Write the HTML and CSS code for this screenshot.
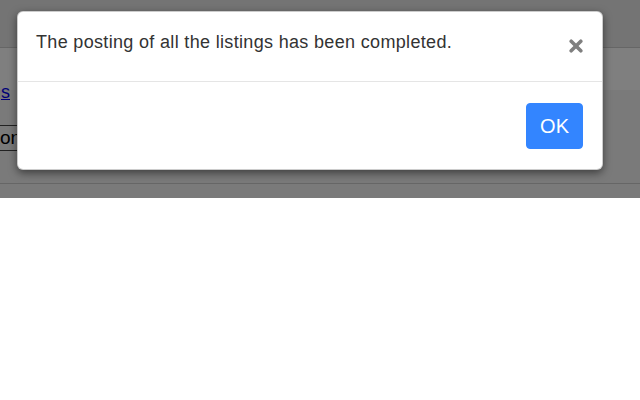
FILE: index.html
```html
<!DOCTYPE html>
<html lang="en">
<head>
<meta charset="utf-8">
<title>Postings</title>
<link rel="stylesheet" href="styles.css">
</head>
<body>
<div class="page">
  <header class="topbar"></header>
  <div class="main">
    <div class="band">
      <a class="link" href="#">s</a>
    </div>
    <div class="action-row"><span class="action">on</span></div>
  </div>
  <div class="backdrop"></div>
  <div class="modal" role="dialog">
    <div class="modal-header">
      <p class="modal-title">The posting of all the listings has been completed.</p>
      <button class="close" aria-label="Close">
        <svg width="14" height="14" viewBox="0 0 14 14"><path d="M2.2 2.2 L11.8 11.8 M11.8 2.2 L2.2 11.8" stroke="#7f7f7f" stroke-width="3.6" stroke-linecap="round" fill="none"/></svg>
      </button>
    </div>
    <div class="modal-footer">
      <button class="btn-ok">OK</button>
    </div>
  </div>
</div>
</body>
</html>
```
FILE: styles.css
```css
html, body {
  margin: 0;
  padding: 0;
  background: #ffffff;
  font-family: "Liberation Sans", Arial, sans-serif;
}
.page {
  position: relative;
  height: 198px;
  overflow: hidden;
  background: #f4f4f4;
}
.topbar {
  height: 47px;
  background: #e8e8e8;
  border-bottom: 1px solid #cccccc;
}
.main {
  height: 135px;
  border-bottom: 1px solid #cccccc;
}
.band {
  height: 42px;
  box-sizing: border-box;
  padding: 34px 0 0 1px;
  background: #ffffff;
}
.link {
  display: inline-block;
  color: #0000ee;
  font-size: 18px;
  line-height: 20px;
  text-decoration: underline;
}
.action-row {
  display: flex;
  margin-top: 35px;
}
.action {
  font-size: 19px;
  line-height: 24px;
  padding-right: 20px;
  color: #000;
  border-top: 1px solid #444;
  border-bottom: 1px solid #444;
  white-space: nowrap;
}
.backdrop {
  position: absolute;
  inset: 0;
  background: rgba(0, 0, 0, 0.5);
}
.modal {
  position: absolute;
  top: 11px;
  left: 17px;
  width: 586px;
  box-sizing: border-box;
  background: #ffffff;
  border: 1px solid rgba(0, 0, 0, 0.2);
  border-radius: 6px;
  box-shadow: 0 3px 9px rgba(0, 0, 0, 0.5);
}
.modal-header {
  display: flex;
  justify-content: space-between;
  align-items: flex-start;
  padding: 17px 19px 26px 18px;
  border-bottom: 1px solid #e5e5e5;
}
.modal-title {
  margin: 0;
  font-size: 18px;
  letter-spacing: 0.33px;
  line-height: 26px;
  color: #333333;
}
.close {
  border: 0;
  background: none;
  padding: 0;
  margin-top: 10px;
  width: 14px;
  height: 14px;
  display: flex;
}
.modal-footer {
  display: flex;
  justify-content: flex-end;
  padding: 21px 19px 20px;
}
.btn-ok {
  font-family: "Liberation Sans", Arial, sans-serif;
  font-size: 20px;
  line-height: 24px;
  padding: 10px 13px;
  color: #ffffff;
  background: #3385ff;
  border: 1px solid #3385ff;
  border-radius: 4px;
}
```
